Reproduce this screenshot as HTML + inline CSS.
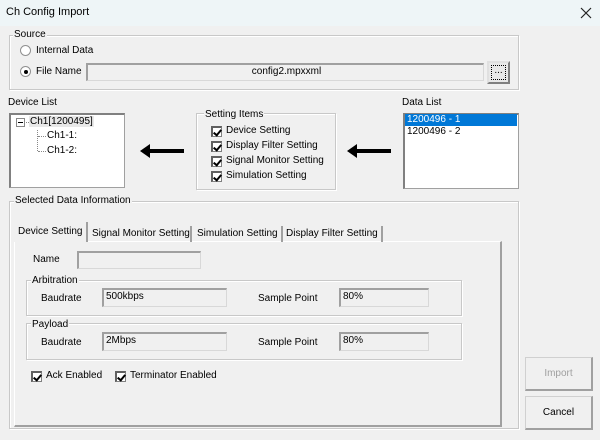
<!DOCTYPE html>
<html><head><meta charset="utf-8"><style>
*{box-sizing:border-box;margin:0;padding:0}
body{width:600px;height:440px;background:#f0f0f0;font-family:"Liberation Sans",sans-serif;font-size:10px;color:#000;position:relative;overflow:hidden}
.a{position:absolute;white-space:nowrap}
.grp{position:absolute;border:1px solid #c8c8c8;box-shadow:inset 1px 1px 0 #fff,1px 1px 0 #fff}
.lbl{position:absolute;background:#f0f0f0;padding:0 1px;line-height:12px}
.tb{position:absolute;background:#f0f0f0;border:1px solid #d8d8d8;border-top:2px solid #a0a0a0;border-left:2px solid #a0a0a0;padding-left:2px;line-height:14px}
.cb{position:absolute;width:11px;height:11px;border:1px solid #808080;border-top:2px solid #606060;border-left:2px solid #606060;background:#fff}
.cb:after{content:"";position:absolute;left:2px;top:0px;width:3px;height:6px;border:solid #000;border-width:0 2px 2px 0;transform:rotate(40deg)}
.rad{position:absolute;width:11px;height:11px;border-radius:50%;border:1px solid #909090;background:#fff}
.list{position:absolute;background:#fff;border:1px solid #a0a0a0;border-top:2px solid #808080;border-left:2px solid #808080}
.arrow{position:absolute;height:4px;background:#000}
.arrow:before{content:"";position:absolute;left:-10px;top:-5px;border:7px solid transparent;border-right:10px solid #000;border-left:0}
.btn{position:absolute;border:1px solid #d0d0d0;border-right:2px solid #a0a0a0;border-bottom:2px solid #a0a0a0;text-align:center;background:#f0f0f0}
</style></head><body>
<div class="a" style="left:0;top:0;width:600px;height:26px;background:#eef5f7"></div>
<div class="a" style="left:6px;top:6px;font-size:11px">Ch Config Import</div>
<svg class="a" style="left:580px;top:7px" width="12" height="12"><path d="M1 1L11 11M11 1L1 11" stroke="#222" stroke-width="1.2"/></svg>

<div class="grp" style="left:9px;top:35px;width:510px;height:55px"></div>
<div class="lbl a" style="left:13px;top:29px">Source</div>
<div class="rad" style="left:20px;top:45px"></div>
<div class="a" style="left:36px;top:45px">Internal Data</div>
<div class="rad" style="left:20px;top:66px"></div>
<div class="a" style="left:23.5px;top:69.5px;width:4px;height:4px;border-radius:50%;background:#000"></div>
<div class="a" style="left:36px;top:66px">File Name</div>
<div class="tb" style="left:86px;top:63px;width:398px;height:18px;text-align:center">config2.mpxxml</div>
<div class="btn" style="left:487px;top:61px;width:23px;height:23px;background:#e8e8e8;border:2px solid #808080;border-top-color:#e0e0e0;border-left-color:#e0e0e0"><div style="position:absolute;left:2px;top:2px;width:15px;height:15px;border:1px dotted #000;font-size:10px;line-height:10px">...</div></div>

<div class="a" style="left:8px;top:97px">Device List</div>
<div class="list" style="left:9px;top:113px;width:116px;height:75px"></div>
<div class="a" style="left:16px;top:118px;width:9px;height:9px;border:1px solid #888;background:#fff"></div>
<div class="a" style="left:18px;top:122px;width:5px;height:1px;background:#000"></div>
<div class="a" style="left:26px;top:122px;width:3px;border-top:1px dotted #888"></div>
<div class="a" style="left:29px;top:116px;background:#e8e8e8;padding:0 1px">Ch1[1200495]</div>
<div class="a" style="left:37px;top:130px;width:8px;height:21px;border-left:1px dotted #888"></div>
<div class="a" style="left:38px;top:136px;width:8px;border-top:1px dotted #888"></div>
<div class="a" style="left:38px;top:151px;width:8px;border-top:1px dotted #888"></div>
<div class="a" style="left:47px;top:130px">Ch1-1:</div>
<div class="a" style="left:47px;top:145px">Ch1-2:</div>

<div class="arrow" style="left:150px;top:149px;width:34px"></div>
<div class="arrow" style="left:357px;top:149px;width:34px"></div>

<div class="grp" style="left:196px;top:113px;width:140px;height:77px"></div>
<div class="lbl a" style="left:204px;top:109px">Setting Items</div>
<div class="cb" style="left:211px;top:126px"></div><div class="a" style="left:226px;top:125px">Device Setting</div>
<div class="cb" style="left:211px;top:141px"></div><div class="a" style="left:226px;top:140px">Display Filter Setting</div>
<div class="cb" style="left:211px;top:156px"></div><div class="a" style="left:226px;top:155px">Signal Monitor Setting</div>
<div class="cb" style="left:211px;top:171px"></div><div class="a" style="left:226px;top:170px">Simulation Setting</div>

<div class="a" style="left:402px;top:97px">Data List</div>
<div class="list" style="left:403px;top:113px;width:116px;height:76px"></div>
<div class="a" style="left:405px;top:114px;width:112px;height:12px;background:#0078d7;color:#fff;line-height:12px;padding-left:2px">1200496 - 1</div>
<div class="a" style="left:407px;top:126px;line-height:12px">1200496 - 2</div>

<div class="grp" style="left:9px;top:201px;width:510px;height:228px"></div>
<div class="lbl a" style="left:14px;top:195px">Selected Data Information</div>
<div class="a" style="left:14px;top:241px;width:488px;height:186px;border-right:2px solid #a0a0a0;border-bottom:2px solid #a0a0a0;border-left:1px solid #fff;border-top:1px solid #fff"></div>
<div class="a" style="left:14px;top:222px;width:74px;height:20px;background:#f0f0f0;border-right:2px solid #a0a0a0;padding:4px 0 0 4px">Device Setting</div>
<div class="a" style="left:89px;top:226px;width:103px;height:16px;border-right:2px solid #a0a0a0;padding:2px 0 0 3px">Signal Monitor Setting</div>
<div class="a" style="left:193px;top:226px;width:90px;height:16px;border-right:2px solid #a0a0a0;padding:2px 0 0 4px">Simulation Setting</div>
<div class="a" style="left:284px;top:226px;width:99px;height:16px;border-right:2px solid #a0a0a0;padding:2px 0 0 2px">Display Filter Setting</div>

<div class="a" style="left:33px;top:254px">Name</div>
<div class="tb" style="left:77px;top:251px;width:124px;height:18px"></div>

<div class="grp" style="left:26px;top:280px;width:436px;height:36px"></div>
<div class="lbl a" style="left:31px;top:275px">Arbitration</div>
<div class="a" style="left:41px;top:293px">Baudrate</div>
<div class="tb" style="left:102px;top:288px;width:125px;height:19px">500kbps</div>
<div class="a" style="left:258px;top:293px">Sample Point</div>
<div class="tb" style="left:339px;top:288px;width:90px;height:19px">80%</div>

<div class="grp" style="left:26px;top:323px;width:436px;height:37px"></div>
<div class="lbl a" style="left:31px;top:319px">Payload</div>
<div class="a" style="left:41px;top:337px">Baudrate</div>
<div class="tb" style="left:102px;top:332px;width:125px;height:19px">2Mbps</div>
<div class="a" style="left:258px;top:337px">Sample Point</div>
<div class="tb" style="left:339px;top:332px;width:90px;height:19px">80%</div>

<div class="cb" style="left:31px;top:371px"></div><div class="a" style="left:46px;top:370px">Ack Enabled</div>
<div class="cb" style="left:115px;top:371px"></div><div class="a" style="left:130px;top:370px">Terminator Enabled</div>

<div class="btn" style="left:525px;top:357px;width:68px;height:34px;line-height:31px;color:#a0a0a0">Import</div>
<div class="btn" style="left:525px;top:396px;width:68px;height:34px;line-height:31px">Cancel</div>
</body></html>
